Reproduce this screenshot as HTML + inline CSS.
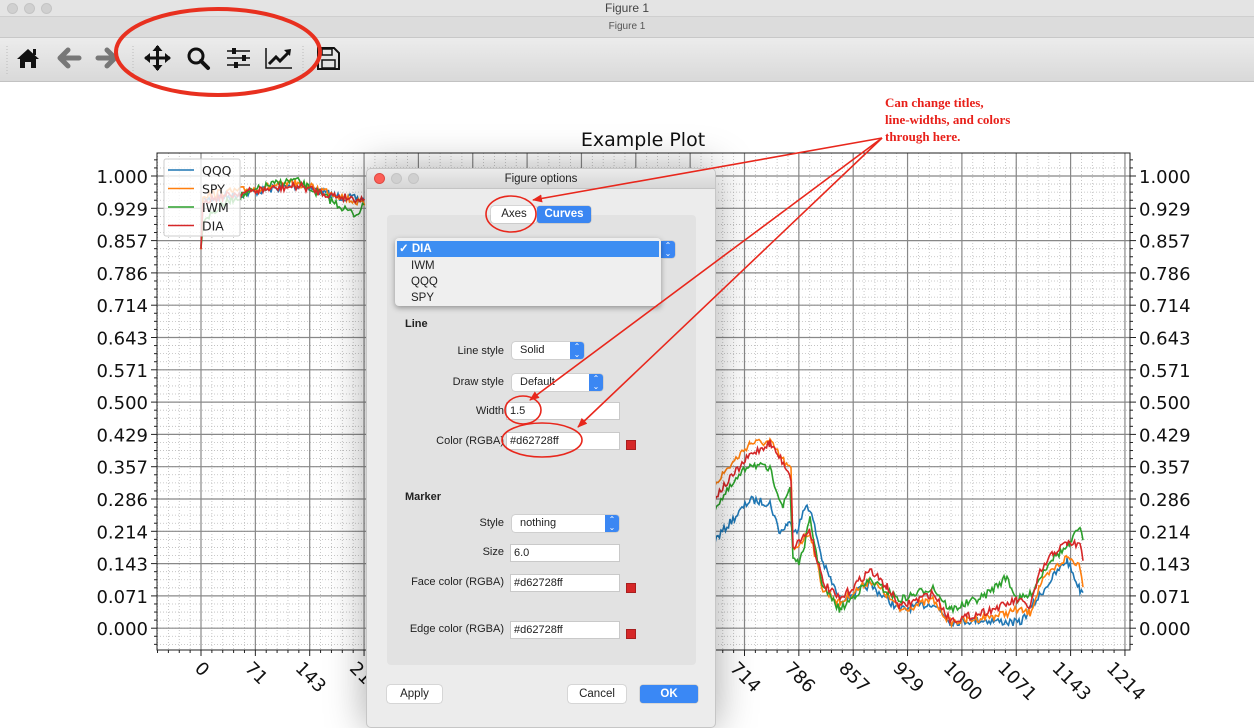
<!DOCTYPE html>
<html><head><meta charset="utf-8"><style>
*{margin:0;padding:0;box-sizing:border-box}
body{width:1254px;height:720px;overflow:hidden;background:#fff;font-family:"Liberation Sans",sans-serif;position:relative}
.tb1{position:absolute;left:0;top:0;width:1254px;height:17px;background:#e4e4e4;border-bottom:1px solid #cfcfcf;text-align:center;font-size:12px;line-height:16px;color:#444}
.tb2{position:absolute;left:0;top:17px;width:1254px;height:21px;background:#dcdcdc;border-bottom:1px solid #c8c8c8;text-align:center;font-size:10px;line-height:20px;color:#555}
.dot{position:absolute;top:3px;width:11px;height:11px;border-radius:50%;background:#d0d0d0;border:1px solid #c4c4c4}
.tool{position:absolute;left:0;top:38px;width:1254px;height:44px;background:linear-gradient(#ececec,#d9d9d9);border-bottom:1px solid #c2c2c2}
#plot{position:absolute;left:0;top:0}
.dlg{position:absolute;left:366px;top:168px;width:350px;height:560px;background:#ececec;border:1px solid #c6c6c6;border-radius:5px;box-shadow:0 0 40px rgba(0,0,0,.35);font-size:11px;color:#222}
.dt{height:20px;background:linear-gradient(#ebebeb,#d6d6d6);border-bottom:1px solid #c4c4c4;text-align:center;font-size:11.5px;line-height:20px;border-radius:5px 5px 0 0}
.grp{position:absolute;left:20px;top:46px;width:309px;height:450px;background:#e2e2e2;border-radius:4px}
.ab{position:absolute}
.lbl{position:absolute;text-align:right;width:120px;font-size:11px}
.fld{position:absolute;background:#fff;border:1px solid #c9c9c9;height:18px;line-height:16px;padding-left:3px;font-size:11px}
.cmb{position:absolute;background:#fff;border-radius:3px;box-shadow:0 0 1px rgba(0,0,0,.5);height:17px;line-height:17px;padding-left:8px;font-size:11px}
.cmb i{position:absolute;right:0;top:0;width:14px;height:17px;background:#3b87f3;border-radius:0 3px 3px 0;color:#fff;font-style:normal;font-size:8px;line-height:8px;text-align:center;padding-top:1px}
.sw{position:absolute;width:10px;height:10px;background:#d62728;border:1px solid #a81f1f}
.btn{position:absolute;height:18px;background:#fff;border-radius:3px;box-shadow:0 0 1px rgba(0,0,0,.6);text-align:center;line-height:18px;font-size:11.5px}
</style></head><body>
<div class="tb1">Figure 1<span class="dot" style="left:7px"></span><span class="dot" style="left:24px"></span><span class="dot" style="left:41px"></span></div>
<div class="tb2">Figure 1</div>
<div class="tool">
<svg width="400" height="44" style="position:absolute;left:0;top:0">
<line x1="7" y1="8" x2="7" y2="38" stroke="#bbb" stroke-dasharray="1 2"/>
<line x1="133" y1="8" x2="133" y2="38" stroke="#bbb" stroke-dasharray="1 2"/>
<line x1="303" y1="8" x2="303" y2="38" stroke="#bbb" stroke-dasharray="1 2"/>
<path d="M17 21 L28 11 L39 21 L36 21 L36 30 L31 30 L31 24 L25 24 L25 30 L20 30 L20 21Z" fill="#111"/>
<rect x="33" y="11" width="3" height="6" fill="#111"/>
<path d="M60 20 L68 12 M60 20 L68 28 M60 20 L79 20" stroke="#777" stroke-width="5" fill="none" stroke-linecap="round" stroke-linejoin="round"/>
<path d="M115 20 L107 12 M115 20 L107 28 M115 20 L98 20" stroke="#777" stroke-width="5" fill="none" stroke-linecap="round" stroke-linejoin="round"/>
<path d="M145 20 H170 M157.5 8 V32" stroke="#111" stroke-width="3"/>
<path d="M144 20 L150 15 L150 25Z M171 20 L165 15 L165 25Z M157.5 7 L152.5 13 L162.5 13Z M157.5 33 L152.5 27 L162.5 27Z" fill="#111"/>
<circle cx="196" cy="18" r="7" stroke="#111" stroke-width="3" fill="none"/>
<path d="M201 23 L208 30" stroke="#111" stroke-width="4" stroke-linecap="round"/>
<path d="M227 13 H250 M227 20 H250 M227 27 H250" stroke="#111" stroke-width="1.5"/>
<rect x="232" y="10" width="4" height="6" fill="#111"/><rect x="242" y="17" width="4" height="6" fill="#111"/><rect x="234" y="24" width="4" height="6" fill="#111"/>
<path d="M266 10 V30 H292" stroke="#111" stroke-width="1.5" fill="none"/>
<path d="M269 26 L276 19 L280 23 L289 14" stroke="#111" stroke-width="3" fill="none"/>
<path d="M291 11 L284 12 L290 18Z" fill="#111"/>
<path d="M318 10 H334 L339 15 V31 H318Z" stroke="#111" stroke-width="2" fill="none"/>
<rect x="322" y="11" width="10" height="6" stroke="#111" stroke-width="1.5" fill="none"/>
<rect x="322" y="22" width="13" height="8" stroke="#111" stroke-width="1.5" fill="none"/>
</svg>
</div>
<svg id="plot" width="1254" height="720"></svg>

<div class="dlg">
<div class="dt">Figure options<span class="dot" style="left:7px;top:4px;background:#fc5f57;border-color:#de4a42"></span><span class="dot" style="left:24px;top:4px"></span><span class="dot" style="left:41px;top:4px"></span></div>
<div class="grp"></div>
<div class="btn" style="left:124px;top:37px;width:46px;height:17px;line-height:17px">Axes</div>
<div class="btn" style="left:170px;top:37px;width:54px;height:17px;line-height:17px;background:#3a86f2;color:#fff;font-weight:bold">Curves</div>
<div class="cmb" style="left:294px;top:72px;width:14px;padding:0"><i>&#8963;<br>&#8964;</i></div>
<div class="ab" style="left:28px;top:69px;width:266px;height:68px;background:#efefef;border-radius:4px;box-shadow:0 2px 6px rgba(0,0,0,.35);font-size:11.5px">
<div style="position:absolute;left:2px;top:3px;width:262px;height:16px;background:#3d8ef2;color:#fff;font-weight:bold;line-height:16px;padding-left:2px">&#10003; DIA</div>
<div style="position:absolute;left:16px;top:20px;line-height:16px">IWM<br>QQQ<br>SPY</div>
</div>
<div class="ab" style="left:38px;top:149px;font-weight:bold">Line</div>
<div class="lbl" style="left:17px;top:176px">Line style</div>
<div class="cmb" style="left:145px;top:173px;width:72px">Solid<i>&#8963;<br>&#8964;</i></div>
<div class="lbl" style="left:17px;top:207px">Draw style</div>
<div class="cmb" style="left:145px;top:205px;width:91px">Default<i>&#8963;<br>&#8964;</i></div>
<div class="lbl" style="left:17px;top:236px">Width</div>
<div class="fld" style="left:139px;top:233px;width:114px">1.5</div>
<div class="lbl" style="left:17px;top:266px">Color (RGBA)</div>
<div class="fld" style="left:139px;top:263px;width:114px">#d62728ff</div>
<div class="sw" style="left:259px;top:271px"></div>
<div class="ab" style="left:38px;top:322px;font-weight:bold">Marker</div>
<div class="lbl" style="left:17px;top:348px">Style</div>
<div class="cmb" style="left:145px;top:346px;width:107px">nothing<i>&#8963;<br>&#8964;</i></div>
<div class="lbl" style="left:17px;top:377px">Size</div>
<div class="fld" style="left:143px;top:375px;width:110px">6.0</div>
<div class="lbl" style="left:17px;top:407px">Face color (RGBA)</div>
<div class="fld" style="left:143px;top:405px;width:110px">#d62728ff</div>
<div class="sw" style="left:259px;top:414px"></div>
<div class="lbl" style="left:17px;top:454px">Edge color (RGBA)</div>
<div class="fld" style="left:143px;top:452px;width:110px">#d62728ff</div>
<div class="sw" style="left:259px;top:460px"></div>
<div class="btn" style="left:20px;top:516px;width:55px">Apply</div>
<div class="btn" style="left:201px;top:516px;width:58px">Cancel</div>
<div class="btn" style="left:273px;top:516px;width:58px;background:#3a88f5;color:#fff;font-weight:bold">OK</div>
</div>

<svg width="1254" height="720" style="position:absolute;left:0;top:0;pointer-events:none">
<defs><marker id="ah" markerWidth="10" markerHeight="8" refX="9" refY="4" orient="auto" markerUnits="userSpaceOnUse"><path d="M0 0 L10 4 L0 8Z" fill="#e8271c"/></marker></defs>
<ellipse cx="218" cy="52" rx="102" ry="43" stroke="#e8301f" stroke-width="4" fill="none"/>
<ellipse cx="511" cy="214" rx="25" ry="18" stroke="#e8271c" stroke-width="1.6" fill="none"/>
<ellipse cx="523" cy="410" rx="18" ry="14" stroke="#e8271c" stroke-width="1.6" fill="none"/>
<ellipse cx="542" cy="440" rx="40" ry="17" stroke="#e8271c" stroke-width="1.6" fill="none"/>
<g stroke="#e8271c" stroke-width="1.6" fill="none">
<line x1="882" y1="138" x2="533" y2="200" marker-end="url(#ah)"/>
<line x1="882" y1="138" x2="530" y2="400" marker-end="url(#ah)"/>
<line x1="882" y1="138" x2="578" y2="427" marker-end="url(#ah)"/>
</g>
<g font-family="Liberation Serif,serif" font-weight="bold" font-size="13" fill="#e8201a">
<text x="885" y="107">Can change titles,</text>
<text x="885" y="124">line-widths, and colors</text>
<text x="885" y="141">through here.</text>
</g>
</svg>

<script>
var s=document.getElementById('plot'),h='';
var L=157,R=1130,T=153,B=650,x0=201,dx=54.35,y0=176,dy=32.3;
for(var k=-4;k<=17*5;k++){var x=x0+k*dx/5;if(x<L||x>R)continue;h+='<line x1="'+x+'" y1="'+T+'" x2="'+x+'" y2="'+B+'" stroke="#bbb" stroke-width="0.8" stroke-dasharray="1 2"/>';}
for(var k=-1;k<=60;k++){var y=y0+k*dy/4; if(y<T||y>B)continue;h+='<line x1="'+L+'" y1="'+y+'" x2="'+R+'" y2="'+y+'" stroke="#bbb" stroke-width="0.8" stroke-dasharray="1 2"/>';}
for(var k=0;k<=17;k++){var x=x0+k*dx;h+='<line x1="'+x+'" y1="'+T+'" x2="'+x+'" y2="'+B+'" stroke="#888" stroke-width="1.2"/>';}
for(var k=0;k<=14;k++){var y=y0+k*dy;h+='<line x1="'+L+'" y1="'+y+'" x2="'+R+'" y2="'+y+'" stroke="#888" stroke-width="1.2"/>';}
h+='<rect x="'+L+'" y="'+T+'" width="'+(R-L)+'" height="'+(B-T)+'" fill="none" stroke="#222" stroke-width="1"/>';
for(var k=-4;k<=17*5;k++){var x=x0+k*dx/5;if(x<L||x>R)continue;var mj=k%5==0;h+='<line x1="'+x+'" y1="'+B+'" x2="'+x+'" y2="'+(B+(mj?6:3))+'" stroke="#222"/>';}
for(var k=-2;k<=59;k++){var y=y0+k*dy/4;if(y<T||y>B)continue;var mj=k%4==0;h+='<line x1="'+L+'" y1="'+y+'" x2="'+(L-(mj?6:3))+'" y2="'+y+'" stroke="#222"/><line x1="'+R+'" y1="'+y+'" x2="'+(R+(mj?6:3))+'" y2="'+y+'" stroke="#222"/>';}
var yl=['1.000','0.929','0.857','0.786','0.714','0.643','0.571','0.500','0.429','0.357','0.286','0.214','0.143','0.071','0.000'];
for(var k=0;k<15;k++){var y=y0+k*dy+7;h+='<text x="148" y="'+y+'" text-anchor="end" font-family="DejaVu Sans,sans-serif" font-size="18" fill="#111">'+yl[k]+'</text><text x="1139" y="'+y+'" font-family="DejaVu Sans,sans-serif" font-size="18" fill="#111">'+yl[k]+'</text>';}
var xl=['0','71','143','214','286','357','429','500','571','643','714','786','857','929','1000','1071','1143','1214'];
for(var k=0;k<18;k++){var x=x0+k*dx+1;var w=xl[k].length*11.5;var cy=660+(w+14)*0.707/2;h+='<text transform="translate('+x+','+cy+') rotate(45)" text-anchor="middle" dy="6" font-family="DejaVu Sans,sans-serif" font-size="18" fill="#111">'+xl[k]+'</text>';}
h+='<text x="643" y="146" text-anchor="middle" font-family="DejaVu Sans,sans-serif" font-size="19" fill="#111">Example Plot</text>';
var seed=7;function rnd(){seed=(seed*16807)%2147483647;return seed/2147483647-0.5;}
function line(pts,col){var d='';for(var i=0;i<pts.length-1;i++){var a=pts[i],b=pts[i+1];for(var x=a[0];x<b[0];x+=1.5){var t=(x-a[0])/(b[0]-a[0]);var y=a[1]+(b[1]-a[1])*t+rnd()*8;d+=(d?'L':'M')+x.toFixed(1)+' '+y.toFixed(1);}}return '<path d="'+d+'" stroke="'+col+'" stroke-width="1.6" fill="none"/>';}
var lft={r:[[201,250],[203,200],[230,195],[260,190],[300,186],[330,195],[365,200]],o:[[201,250],[203,195],[230,192],[260,188],[295,183],[330,192],[365,205]],g:[[201,250],[203,220],[230,200],[270,185],[295,180],[330,200],[355,215],[365,205]],b:[[201,250],[203,200],[230,196],[265,190],[300,185],[335,196],[365,200]]};
var rt={
r:[[715,497],[750,455],[770,443],[788,470],[791,478],[793,547],[810,530],[823,583],[840,600],[870,570],[887,587],[900,607],[933,593],[950,620],[967,617],[1000,607],[1017,600],[1030,607],[1040,573],[1053,553],[1067,543],[1080,545],[1084,565]],
o:[[715,483],[750,443],[770,442],[788,467],[791,470],[793,550],[810,532],[823,590],[840,603],[870,580],[887,595],[900,610],[933,600],[950,622],[967,620],[1000,615],[1017,610],[1030,613],[1040,585],[1053,570],[1067,557],[1080,565],[1084,590]],
g:[[715,507],[750,463],[770,470],[783,507],[790,487],[793,557],[800,563],[810,520],[823,587],[840,610],[870,580],[900,600],[933,587],[950,610],[983,597],[1007,577],[1017,600],[1030,595],[1050,560],[1070,545],[1080,525],[1084,550]],
b:[[715,540],[750,500],[770,503],[780,533],[788,523],[797,530],[807,503],[813,520],[823,563],[840,600],[870,585],[900,610],[933,603],[950,622],[980,620],[1020,623],[1040,595],[1053,577],[1067,560],[1080,590],[1084,590]]};
var cols={b:'#1f77b4',o:'#ff7f0e',g:'#2ca02c',r:'#d62728'};
['b','o','g','r'].forEach(function(c){h+=line(lft[c],cols[c])+line(rt[c],cols[c]);});
h+='<rect x="164" y="159" width="76" height="77" fill="rgba(255,255,255,0.8)" stroke="#ccc" rx="2"/>';
var ln=[['QQQ','#1f77b4'],['SPY','#ff7f0e'],['IWM','#2ca02c'],['DIA','#d62728']];
for(var i=0;i<4;i++){var y=170+i*18.5;h+='<line x1="168" y1="'+y+'" x2="194" y2="'+y+'" stroke="'+ln[i][1]+'" stroke-width="1.6"/><text x="202" y="'+(y+5)+'" font-family="DejaVu Sans,sans-serif" font-size="12.5" fill="#222">'+ln[i][0]+'</text>';}
s.innerHTML=h;
</script>
</body></html>
